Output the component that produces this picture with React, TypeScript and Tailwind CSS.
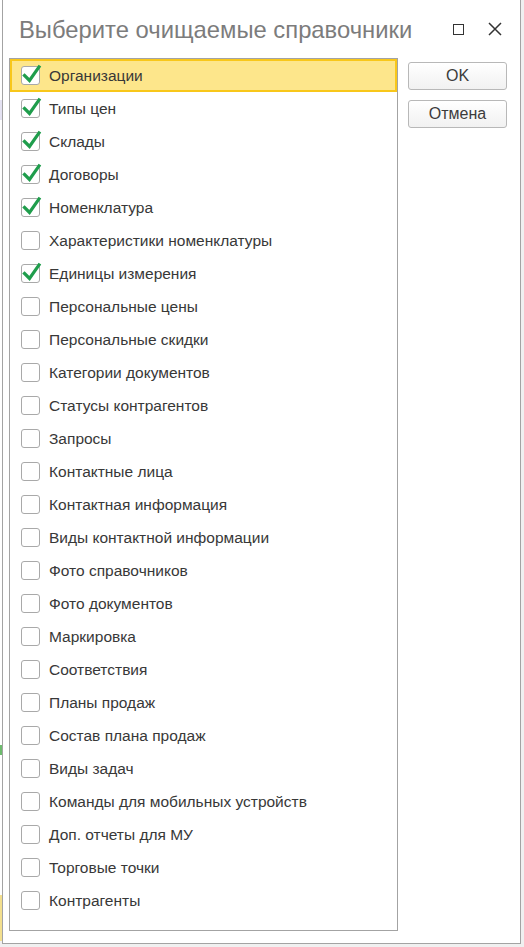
import React from "react";

const items: { label: string; checked: boolean }[] = [
  { label: "Организации", checked: true },
  { label: "Типы цен", checked: true },
  { label: "Склады", checked: true },
  { label: "Договоры", checked: true },
  { label: "Номенклатура", checked: true },
  { label: "Характеристики номенклатуры", checked: false },
  { label: "Единицы измерения", checked: true },
  { label: "Персональные цены", checked: false },
  { label: "Персональные скидки", checked: false },
  { label: "Категории документов", checked: false },
  { label: "Статусы контрагентов", checked: false },
  { label: "Запросы", checked: false },
  { label: "Контактные лица", checked: false },
  { label: "Контактная информация", checked: false },
  { label: "Виды контактной информации", checked: false },
  { label: "Фото справочников", checked: false },
  { label: "Фото документов", checked: false },
  { label: "Маркировка", checked: false },
  { label: "Соответствия", checked: false },
  { label: "Планы продаж", checked: false },
  { label: "Состав плана продаж", checked: false },
  { label: "Виды задач", checked: false },
  { label: "Команды для мобильных устройств", checked: false },
  { label: "Доп. отчеты для МУ", checked: false },
  { label: "Торговые точки", checked: false },
  { label: "Контрагенты", checked: false },
];

function CheckBox({ checked }: { checked: boolean }) {
  return (
    <div className="relative w-[19px] h-[19px] shrink-0 rounded-[3px] border border-[#a9a9a9] bg-white">
      {checked && (
        <svg
          className="absolute left-[-1px] top-[-3px] overflow-visible"
          width="21"
          height="21"
          viewBox="0 0 21 21"
        >
          <path
            d="M3.5 11.5 L8.5 16.5 L18 3"
            fill="none"
            stroke="#1f9d4c"
            strokeWidth="3.2"
            strokeLinecap="square"
          />
        </svg>
      )}
    </div>
  );
}

function Button({ children }: { children: React.ReactNode }) {
  return (
    <button className="h-[28px] w-[99px] rounded-[3px] border border-[#b8b8b8] bg-gradient-to-b from-white to-[#f1f1f1] text-[16px] text-[#3c3c3c] leading-none">
      {children}
    </button>
  );
}

export default function App() {
  return (
    <div
      className="flex w-[524px] h-[947px] bg-[#f0f0f0] overflow-hidden"
      style={{ fontFamily: '"Liberation Sans", Arial, sans-serif' }}
    >
      {/* page behind the dialog */}
      <div className="flex flex-col w-[2px] h-[941px]">
        <div className="h-[100px] bg-white" />
        <div className="h-[20px] bg-[#e4e2f2]" />
        <div className="h-[625px] bg-white" />
        <div className="h-[10px] bg-[#6dbb6d]" />
        <div className="h-[140px] bg-white" />
        <div className="flex-1 bg-[#f3df8e]" />
      </div>

      <div className="flex flex-col w-[519px] h-[944px] bg-white border-x border-b border-[#a3a3a3]">
        {/* title bar */}
        <div className="flex items-center h-[58px] pl-[16px] pr-[18px]">
          <h1 className="flex-1 text-[23.8px] text-[#7c7c7c] leading-none pt-[1px]">
            Выберите очищаемые справочники
          </h1>
          <div className="flex items-center gap-[24px]">
            <div className="w-[11px] h-[11px] border-[1.5px] border-[#333]" />
            <svg width="14" height="14" viewBox="0 0 14 14">
              <path d="M1 1 L13 13 M13 1 L1 13" stroke="#333" strokeWidth="1.5" fill="none" />
            </svg>
          </div>
        </div>

        <div className="flex gap-[10px] pl-[6px] pr-[13px]">
          {/* list */}
          <div className="w-[390px] h-[873px] border border-[#a3a3a3] pb-[12px]">
            {items.map((item, i) => (
              <div
                key={item.label}
                className={
                  i === 0
                    ? "flex items-center gap-[9px] h-[33px] pl-[9px] bg-[#fde68b] border-2 border-[#f8c71a]"
                    : "flex items-center gap-[9px] h-[33px] pl-[11px]"
                }
              >
                <CheckBox checked={item.checked} />
                <span className="text-[15.5px] text-[#383838] leading-none">{item.label}</span>
              </div>
            ))}
          </div>

          {/* buttons */}
          <div className="flex flex-col gap-[10px] pt-[4px]">
            <Button>OK</Button>
            <Button>Отмена</Button>
          </div>
        </div>
      </div>
    </div>
  );
}
